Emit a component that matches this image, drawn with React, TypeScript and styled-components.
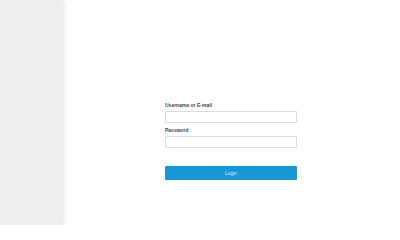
import React from 'react';
import styled, { createGlobalStyle } from 'styled-components';

const GlobalStyle = createGlobalStyle`
  html, body {
    margin: 0;
    padding: 0;
    height: 100%;
    background: #ffffff;
    font-family: "Liberation Sans", Arial, sans-serif;
  }
  #root {
    height: 100%;
  }
`;

const Page = styled.div`
  display: flex;
  height: 225px;
  width: 400px;
  overflow: hidden;
`;

const Sidebar = styled.aside`
  width: 62px;
  flex-shrink: 0;
  background: #efefef;
  box-shadow: 2px 0 5px rgba(0, 0, 0, 0.1);
  position: relative;
  z-index: 1;
`;

const Main = styled.main`
  flex: 1;
  display: flex;
  justify-content: center;
  padding-top: 101px;
`;

const Form = styled.form`
  width: 132px;
  display: flex;
  flex-direction: column;
`;

const Label = styled.label`
  font-size: 5px;
  font-weight: bold;
  color: #444;
  line-height: 8px;
  margin-bottom: 2px;
`;

const Input = styled.input`
  box-sizing: border-box;
  height: 12px;
  width: 100%;
  border: 1px solid #dcdcdc;
  border-radius: 1px;
  margin: 0 0 3px 0;
  padding: 0 3px;
  font-size: 5px;
  background: #fff;
  outline: none;
`;

const Button = styled.button`
  margin-top: 15px;
  height: 14px;
  width: 100%;
  border: none;
  border-radius: 1px;
  background: #1697d8;
  color: #d6ecf8;
  font-family: "Liberation Sans", Arial, sans-serif;
  font-size: 5px;
  padding: 0;
  cursor: pointer;
`;

export default function App() {
  return (
    <>
      <GlobalStyle />
      <Page>
        <Sidebar />
        <Main>
          <Form onSubmit={(e) => e.preventDefault()}>
            <Label htmlFor="user">Username or E-mail</Label>
            <Input id="user" type="text" />
            <Label htmlFor="pass">Password</Label>
            <Input id="pass" type="password" />
            <Button type="submit">Login</Button>
          </Form>
        </Main>
      </Page>
    </>
  );
}
